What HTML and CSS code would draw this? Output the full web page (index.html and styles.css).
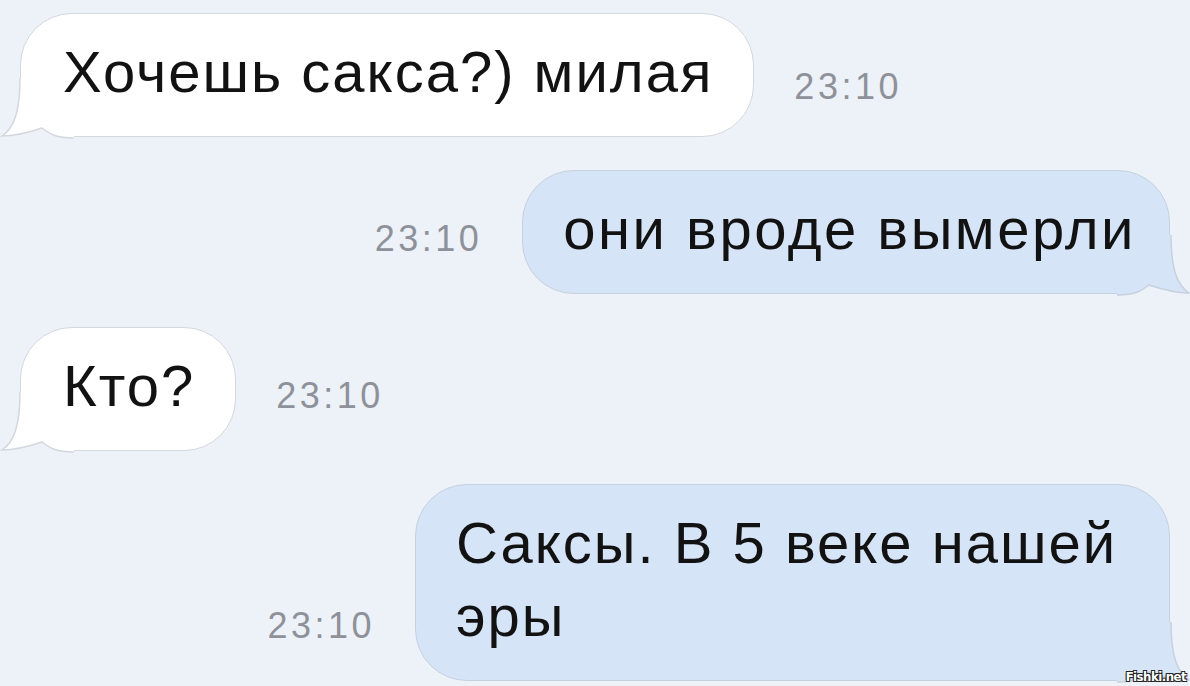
FILE: index.html
```html
<!DOCTYPE html>
<html lang="ru">
<head>
    <meta charset="UTF-8">
    <meta name="viewport" content="width=device-width, initial-scale=1.0">
    <title>Саксы</title>
    <link rel="stylesheet" href="styles.css">
</head>
<body>
    <div class="chat">
        <div class="row row-in row-first">
            <div class="bubble bubble-in">
                <svg class="tail" viewBox="0 0 80 70" width="80" height="70">
                    <path class="tail-fill" d="M20,6 C20,40 14,56 2,64 C14,64 30,60 42,56 C50,62 56,66 74,66 L74,6 Z"/>
                    <path class="tail-line" d="M20,6 C20,40 14,56 2,64 C14,64 30,60 42,56 C50,62 56,66 74,66"/>
                </svg>
                <span class="text">Хочешь сакса?) милая</span>
            </div>
            <span class="time">23:10</span>
        </div>

        <div class="row row-out">
            <span class="time">23:10</span>
            <div class="bubble bubble-out">
                <svg class="tail" viewBox="0 0 80 70" width="80" height="70">
                    <path class="tail-fill" d="M20,6 C20,40 14,56 2,64 C14,64 30,60 42,56 C50,62 56,66 74,66 L74,6 Z"/>
                    <path class="tail-line" d="M20,6 C20,40 14,56 2,64 C14,64 30,60 42,56 C50,62 56,66 74,66"/>
                </svg>
                <span class="text">они вроде вымерли</span>
            </div>
        </div>

        <div class="row row-in">
            <div class="bubble bubble-in">
                <svg class="tail" viewBox="0 0 80 70" width="80" height="70">
                    <path class="tail-fill" d="M20,6 C20,40 14,56 2,64 C14,64 30,60 42,56 C50,62 56,66 74,66 L74,6 Z"/>
                    <path class="tail-line" d="M20,6 C20,40 14,56 2,64 C14,64 30,60 42,56 C50,62 56,66 74,66"/>
                </svg>
                <span class="text">Кто?</span>
            </div>
            <span class="time">23:10</span>
        </div>

        <div class="row row-out">
            <span class="time">23:10</span>
            <div class="bubble bubble-out bubble-wide">
                <svg class="tail" viewBox="0 0 80 70" width="80" height="70">
                    <path class="tail-fill" d="M20,6 C20,40 14,56 2,64 C14,64 30,60 42,56 C50,62 56,66 74,66 L74,6 Z"/>
                    <path class="tail-line" d="M20,6 C20,40 14,56 2,64 C14,64 30,60 42,56 C50,62 56,66 74,66"/>
                </svg>
                <span class="text">Саксы. В 5 веке нашей эры</span>
            </div>
        </div>
    </div>

    <div class="watermark">Fishki.net</div>
</body>
</html>
```

FILE: styles.css
```css
body {
    margin: 0;
    height: 686px;
    overflow: hidden;
    background-color: #edf1f8;
    font-family: "Liberation Sans", Arial, sans-serif;
    position: relative;
}

.chat {
    display: flex;
    flex-direction: column;
    gap: 33px;
    padding: 13px 20px 0 20px;
}

.row {
    display: flex;
    align-items: flex-end;
    gap: 40px;
}

.row-out {
    justify-content: flex-end;
}

.bubble {
    position: relative;
    padding: 21px 40px 28px 42px;
    border-radius: 52px;
    border: 1.5px solid #d3d7de;
    font-size: 58px;
    line-height: 73px;
    letter-spacing: 2px;
    color: #121212;
}

.bubble .text {
    position: relative;
}

.bubble-in {
    background-color: #ffffff;
}

.bubble-out {
    background-color: #d6e4f7;
    border-color: #c6d1df;
    padding-left: 40px;
    padding-right: 33px;
    letter-spacing: 2.5px;
}

.bubble-wide {
    max-width: 680px;
    letter-spacing: 2px;
}

.tail {
    position: absolute;
    left: -21.5px;
    bottom: -5.5px;
}

.bubble-out .tail {
    left: auto;
    right: -21.5px;
    transform: scaleX(-1);
}

.tail-fill {
    fill: #ffffff;
}

.bubble-out .tail-fill {
    fill: #d6e4f7;
}

.tail-line {
    fill: none;
    stroke: #d3d7de;
    stroke-width: 1.5;
}

.bubble-out .tail-line {
    stroke: #c6d1df;
}

.time {
    font-size: 36px;
    line-height: 36px;
    letter-spacing: 3.5px;
    color: #8e9199;
    margin-bottom: 37px;
}

.row-first .time {
    margin-bottom: 32px;
}

.watermark {
    position: absolute;
    right: 4px;
    bottom: 2px;
    font-family: "DejaVu Sans Condensed", "Liberation Sans", sans-serif;
    font-weight: bold;
    font-size: 13px;
    letter-spacing: -0.5px;
    color: #ffffff;
    text-shadow: -1px -1px 0 #222, 1px -1px 0 #222, -1px 1px 0 #222, 1px 1px 0 #222;
}
```
